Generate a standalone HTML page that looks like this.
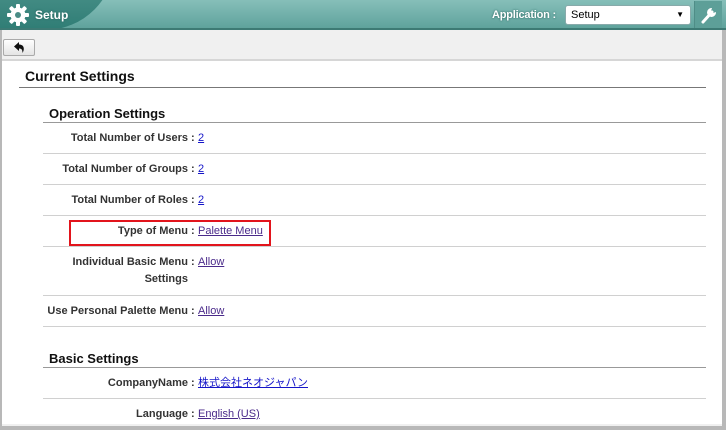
<!DOCTYPE html>
<html><head><meta charset="utf-8"><style>
*{margin:0;padding:0;box-sizing:border-box}
body{width:726px;height:426px;overflow:hidden;background:#b8b8b8;font-family:"Liberation Sans","Noto Sans CJK JP",sans-serif;position:relative}
#hdr{position:absolute;left:0;top:0;width:726px;height:30px;background:linear-gradient(180deg,#86bfb9,#5fa39c);border-bottom:2px solid #3d7a74;overflow:hidden}
#swoosh{position:absolute;left:-60px;top:-40px;width:175px;height:70px;background:linear-gradient(180deg,#5a9c95,#2f7d75);border-radius:0 0 140px 0}
#title{position:absolute;left:35px;top:8px;color:#fff;font-weight:bold;font-size:12px;text-shadow:0 0 2px #245e58}
#applbl{position:absolute;left:492px;top:9px;color:#fff;font-weight:bold;font-size:11px;white-space:nowrap;letter-spacing:-0.2px;text-shadow:0 0 2px #245e58}
#sel{position:absolute;left:565px;top:5px;width:126px;height:20px;background:#fff;border:1px solid #8aa;border-radius:3px;font-size:11px;padding:3px 5px}
#sel span{position:absolute;right:6px;top:4px;font-size:8px}
#wr{position:absolute;left:694px;top:1px;width:28px;height:27px;border-left:1px solid #4f8d87;background:#5d9f98}
#gray{position:absolute;left:2px;top:30px;width:720px;height:396px;background:#f0f0f0}
#back{position:absolute;left:3px;top:39px;width:32px;height:17px;background:linear-gradient(#fff,#e4e4e4);border:1px solid #aaa;border-radius:2px}
#panel{position:absolute;left:2px;top:59px;width:720px;height:365px;background:#fff;border-top:2px solid #d6d6d6}
.h1{position:absolute;left:23px;top:7px;font-size:14px;font-weight:bold;color:#111}
.l1{position:absolute;left:17px;top:26px;width:687px;height:1px;background:#777}
.h2{position:absolute;left:47px;font-size:13px;font-weight:bold;color:#111}
.l2{position:absolute;left:41px;width:663px;height:1px;background:#999}
.row{position:absolute;left:41px;width:663px;border-bottom:1px solid #d0d0d0;font-size:11px}
.lab{position:absolute;left:0;width:145px;text-align:right;font-weight:bold;color:#333;line-height:17px}
.col{position:absolute;left:148px;font-weight:bold;color:#333;line-height:17px}
.val{position:absolute;left:155px;line-height:17px}
a{color:#1515c8;text-decoration:underline}
a.v{color:#4a2a8a}
#red{position:absolute;left:67px;top:159px;width:202px;height:26px;border:2px solid #e2141c}
</style></head><body>
<div id="hdr"><div id="swoosh"></div>
<svg style="position:absolute;left:6px;top:3px" width="24" height="24" viewBox="0 0 24 24"><g fill="#fff"><circle cx="12" cy="12" r="7.5"/><g id="t"><rect x="10" y="1" width="4" height="5" rx="1"/></g><use href="#t" transform="rotate(45 12 12)"/><use href="#t" transform="rotate(90 12 12)"/><use href="#t" transform="rotate(135 12 12)"/><use href="#t" transform="rotate(180 12 12)"/><use href="#t" transform="rotate(225 12 12)"/><use href="#t" transform="rotate(270 12 12)"/><use href="#t" transform="rotate(315 12 12)"/></g><circle cx="12" cy="12" r="3" fill="#4a8c86"/></svg>
<div id="title">Setup</div>
<div id="applbl">Application :</div>
<div id="sel">Setup<span>▼</span></div>
<div id="wr"><svg width="28" height="27" viewBox="0 0 28 27"><path d="M8 21 L17 11" stroke="#fff" stroke-width="3" stroke-linecap="round"/><path d="M17 7 a4.5 4.5 0 1 0 4 4 l-3 1 -2-2z" fill="#fff"/></svg></div>
</div>
<div id="gray"></div>
<div id="back"><svg width="30" height="15" viewBox="0 0 30 15"><path d="M10 6.5 L15 2 V4.5 C20 4.5 21 9 18.5 13 C18.5 9.5 17.5 8.5 15 8.5 V11Z" fill="#111"/></svg></div>
<div id="panel">
<div class="h1">Current Settings</div><div class="l1"></div>
<div class="h2" style="top:45px">Operation Settings</div><div class="l2" style="top:61px"></div>
<div class="row" style="top:62px;height:31px"><div class="lab" style="top:7px">Total Number of Users</div><div class="col" style="top:7px">:</div><div class="val" style="top:7px"><a>2</a></div></div>
<div class="row" style="top:93px;height:31px"><div class="lab" style="top:7px">Total Number of Groups</div><div class="col" style="top:7px">:</div><div class="val" style="top:7px"><a>2</a></div></div>
<div class="row" style="top:124px;height:31px"><div class="lab" style="top:7px">Total Number of Roles</div><div class="col" style="top:7px">:</div><div class="val" style="top:7px"><a>2</a></div></div>
<div class="row" style="top:155px;height:31px"><div class="lab" style="top:7px">Type of Menu</div><div class="col" style="top:7px">:</div><div class="val" style="top:7px"><a class="v">Palette Menu</a></div></div>
<div class="row" style="top:186px;height:49px"><div class="lab" style="top:7px">Individual Basic Menu<br>Settings</div><div class="col" style="top:7px">:</div><div class="val" style="top:7px"><a class="v">Allow</a></div></div>
<div class="row" style="top:235px;height:31px"><div class="lab" style="top:7px">Use Personal Palette Menu</div><div class="col" style="top:7px">:</div><div class="val" style="top:7px"><a class="v">Allow</a></div></div>
<div class="h2" style="top:290px">Basic Settings</div><div class="l2" style="top:306px;background:#999"></div>
<div class="row" style="top:307px;height:31px"><div class="lab" style="top:7px">CompanyName</div><div class="col" style="top:7px">:</div><div class="val" style="top:7px"><a>株式会社ネオジャパン</a></div></div>
<div class="row" style="top:338px;height:31px;border:0"><div class="lab" style="top:7px">Language</div><div class="col" style="top:7px">:</div><div class="val" style="top:7px"><a class="v">English (US)</a></div></div>
<div id="red"></div>
</div>
</body></html>
